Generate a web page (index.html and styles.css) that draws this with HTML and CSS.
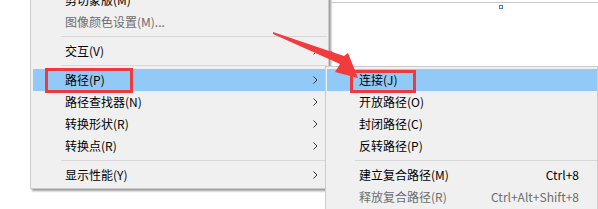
FILE: index.html
```html
<!DOCTYPE html>
<html lang="zh-CN">
<head>
<meta charset="utf-8">
<title>路径菜单</title>
<link rel="stylesheet" href="styles.css">
</head>
<body>
<div class="screen">
  <div class="artboard"></div>
  <span class="anchor"></span>
  <svg class="path-seg" width="16" height="14" viewBox="0 0 16 14"><line x1="0.5" y1="0.5" x2="13" y2="12" stroke="#5a8ed8" stroke-width="1"/></svg>

  <div class="menu menu-main">
    <div class="item"><span class="label">剪切蒙版(M)</span></div>
    <div class="item disabled"><span class="label">图像颜色设置(M)...</span></div>
    <div class="sep"></div>
    <div class="item"><span class="label">交互(V)</span><svg class="chev" width="5" height="8" viewBox="0 0 5 8"><polyline points="0.5,0.5 4,4 0.5,7.5" fill="none" stroke="#333" stroke-width="1"/></svg></div>
    <div class="sep"></div>
    <div class="item active"><span class="label">路径(P)</span><svg class="chev" width="5" height="8" viewBox="0 0 5 8"><polyline points="0.5,0.5 4,4 0.5,7.5" fill="none" stroke="#333" stroke-width="1"/></svg></div>
    <div class="item"><span class="label">路径查找器(N)</span><svg class="chev" width="5" height="8" viewBox="0 0 5 8"><polyline points="0.5,0.5 4,4 0.5,7.5" fill="none" stroke="#333" stroke-width="1"/></svg></div>
    <div class="item"><span class="label">转换形状(R)</span><svg class="chev" width="5" height="8" viewBox="0 0 5 8"><polyline points="0.5,0.5 4,4 0.5,7.5" fill="none" stroke="#333" stroke-width="1"/></svg></div>
    <div class="item"><span class="label">转换点(R)</span><svg class="chev" width="5" height="8" viewBox="0 0 5 8"><polyline points="0.5,0.5 4,4 0.5,7.5" fill="none" stroke="#333" stroke-width="1"/></svg></div>
    <div class="sep"></div>
    <div class="item"><span class="label">显示性能(Y)</span><svg class="chev" width="5" height="8" viewBox="0 0 5 8"><polyline points="0.5,0.5 4,4 0.5,7.5" fill="none" stroke="#333" stroke-width="1"/></svg></div>
  </div>

  <div class="menu menu-sub">
    <div class="item active"><span class="label">连接(J)</span></div>
    <div class="item"><span class="label">开放路径(O)</span></div>
    <div class="item"><span class="label">封闭路径(C)</span></div>
    <div class="item"><span class="label">反转路径(P)</span></div>
    <div class="sep"></div>
    <div class="item"><span class="label">建立复合路径(M)</span><span class="key">Ctrl+8</span></div>
    <div class="item disabled"><span class="label">释放复合路径(R)</span><span class="key">Ctrl+Alt+Shift+8</span></div>
  </div>

  <div class="callout callout-main"></div>
  <div class="callout callout-sub"></div>
  <svg class="arrow" width="598" height="209" viewBox="0 0 598 209">
    <polygon points="273,32 344,56 348,53 358,78 335,72 340,64 273,34" fill="#f23b3d"/>
  </svg>
</div>
</body>
</html>
```
FILE: styles.css
```css
html, body {
  margin: 0;
  padding: 0;
  background: #ffffff;
}

.screen {
  position: relative;
  width: 598px;
  height: 209px;
  overflow: hidden;
  font-family: "Noto Sans CJK SC", "Microsoft YaHei", sans-serif;
  font-size: 12px;
  color: #000;
}

.artboard {
  position: absolute;
  left: 331px;
  top: 2px;
  width: 267px;
  height: 60px;
  border-top: 1px solid #c9c9c9;
}

.anchor {
  position: absolute;
  left: 499px;
  top: 5px;
  width: 2px;
  height: 2px;
  border: 1px solid #3a7ee0;
  background: #fff;
}

.path-seg {
  position: absolute;
  left: 330px;
  top: 50px;
}

.menu {
  background: #f0f0f0;
  border: 1px solid #cccccc;
  display: flex;
  flex-direction: column;
}

.menu-main {
  width: 299px;
  box-sizing: border-box;
  margin: -14px 0 0 30px;
  padding: 2px 1px 2px 2px;
  box-shadow: 2px 2px 2px rgba(0, 0, 0, 0.4);
}

.menu-sub {
  position: absolute;
  left: 325px;
  top: 66px;
  width: 273px;
  box-sizing: border-box;
  padding: 2px 0 2px 1px;
}

.item {
  height: 22px;
  display: flex;
  align-items: center;
  padding: 0 9px 0 32px;
  line-height: 22px;
  white-space: nowrap;
}

.menu-sub .item {
  padding-right: 18px;
}

.item .label {
  flex: 1;
}

.item.active {
  background: #91c9f7;
}

.item.disabled {
  color: #6d6d6d;
}

.key {
  text-align: right;
}

.chev {
  display: block;
}

.sep {
  height: 1px;
  background: #d7d7d7;
  margin: 3px 0 3px 28px;
}

.callout {
  position: absolute;
  border: 3px solid #f0393c;
  box-sizing: border-box;
}

.callout-main {
  left: 45px;
  top: 68px;
  width: 88px;
  height: 25px;
}

.callout-sub {
  left: 350px;
  top: 70px;
  width: 66px;
  height: 23px;
}

.arrow {
  position: absolute;
  left: 0;
  top: 0;
}
```
